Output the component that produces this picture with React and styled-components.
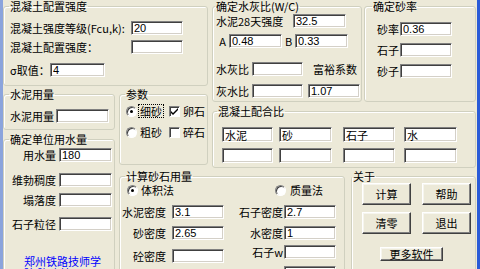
import React from 'react';
import styled, {createGlobalStyle} from 'styled-components';

const GlobalStyle = createGlobalStyle`
  html, body {
    margin: 0;
    padding: 0;
    height: 269px;
    overflow: hidden;
    background: #ECE9D8;
  }
  body {
    font-family: "Noto Sans CJK SC", "Liberation Sans", sans-serif;
    font-size: 11px;
    color: #000;
  }
`;

const Window = styled.div`
  width: 480px;
  height: 269px;
  box-sizing: border-box;
  overflow: hidden;
  background: #ECE9D8;
  border-left: 3px solid #8ba4dc;
  border-right: 3px solid #2a5bd7;
`;

const Form = styled.div`
  display: grid;
  grid-template-columns: 112px 4px 89px 4px 133px 6px 11px 2px 112px;
  grid-template-rows: 86px 2px 14px 3px 25px 3px 32px 3px 2px 120px;
  grid-template-areas:
    "g1 g1 g1 . g2 g2 g2 . g3"
    ".  .  .  . g2 g2 g2 . g3"
    "g4 . par . g2 g2 g2 . g3"
    "g4 . par . .  .  .  . . "
    "g4 . par . g7 g7 g7 g7 g7"
    ".  . par . g7 g7 g7 g7 g7"
    "g5 . par . g7 g7 g7 g7 g7"
    "g5 . .   . g7 g7 g7 g7 g7"
    "g5 . .   . .  .  .  . . "
    "g5 . calc calc calc . ab ab ab";
`;

const Group = styled.fieldset`
  grid-area: ${p => p.$area};
  margin: 0;
  padding: 0;
  min-width: 0;
  border: 1px solid #D0D0BF;
  border-radius: 3px;
  box-shadow: inset 1px 1px 0 #fff;
`;

const Legend = styled.legend`
  margin-left: ${p => p.$ml ?? 5}px;
  padding: 0 1px;
  font-size: 11px;
  line-height: 12px;
  white-space: nowrap;
`;

const Body = styled.div`
  display: flex;
  flex-direction: column;
  padding-left: ${p => p.$pl ?? 0}px;
`;

const Row = styled.div`
  display: flex;
  align-items: center;
  margin-top: ${p => p.$mt ?? 0}px;
  margin-left: ${p => p.$ml ?? 0}px;
`;

const Label = styled.span`
  flex: none;
  width: ${p => p.$w ? `${p.$w}px` : 'auto'};
  margin-left: ${p => p.$ml ?? 0}px;
  text-align: ${p => p.$align || 'left'};
  line-height: 14px;
  white-space: nowrap;
`;

const Field = styled.input`
  flex: none;
  box-sizing: border-box;
  width: ${p => p.$w ?? 52}px;
  height: ${p => p.$h ?? 14}px;
  margin: 0 0 0 ${p => p.$ml ?? 0}px;
  padding: 0 2px;
  background: #fff;
  border: 1px solid;
  border-color: #808080 #fff #fff #808080;
  box-shadow: inset 1px 1px 0 #404040, inset -1px -1px 0 #d4d0c8;
  font-family: "Liberation Sans", "Noto Sans CJK SC", sans-serif;
  font-size: 11px;
  line-height: 12px;
  color: #000;
  outline: none;
`;

const Radio = styled.span`
  flex: none;
  box-sizing: border-box;
  width: 11px;
  height: 11px;
  margin-left: ${p => p.$ml ?? 0}px;
  border-radius: 50%;
  background: #fff;
  border: 1px solid;
  border-color: #808080 #fff #fff #808080;
  box-shadow: inset 1px 1px 0 #404040;
  display: flex;
  align-items: center;
  justify-content: center;

  &::after {
    content: '';
    width: 3px;
    height: 3px;
    border-radius: 50%;
    background: ${p => p.$on ? '#000' : 'transparent'};
  }
`;

const Check = styled.span`
  flex: none;
  box-sizing: border-box;
  width: 11px;
  height: 11px;
  margin-left: ${p => p.$ml ?? 0}px;
  background: #fff;
  border: 1px solid;
  border-color: #808080 #fff #fff #808080;
  box-shadow: inset 1px 1px 0 #404040;
  display: flex;
  align-items: center;
  justify-content: center;
`;

const Focus = styled.span`
  flex: none;
  margin-left: ${p => p.$ml ?? 0}px;
  padding: 0 1px;
  border: 1px dotted #000;
  line-height: 12px;
  white-space: nowrap;
`;

const Credit = styled.div`
  margin: 24px 0 0 20px;
  width: 80px;
  color: #0000ff;
  line-height: 12px;
`;

const Buttons = styled.div`
  display: grid;
  grid-template-columns: 49px 49px;
  column-gap: 11px;
  row-gap: 7px;
  margin: 1px 0 0 10px;
`;

const Button = styled.button`
  box-sizing: border-box;
  width: ${p => p.$w ?? 49}px;
  height: ${p => p.$h ?? 22}px;
  margin-left: ${p => p.$ml ?? 0}px;
  margin-top: ${p => p.$mt ?? 0}px;
  padding: 0;
  background: #ECE9D8;
  border: 1px solid;
  border-color: #fff #404040 #404040 #fff;
  box-shadow: inset -1px -1px 0 #808080, inset 1px 1px 0 #f6f5ee;
  font-family: "Noto Sans CJK SC", sans-serif;
  font-size: 11px;
  line-height: 12px;
  color: #000;
`;

const Columns = styled.div`
  display: flex;
`;

const Col = styled.div`
  display: flex;
  flex-direction: column;
  width: ${p => p.$w}px;
`;

const Tick = () => (
  <svg width="7" height="7" viewBox="0 0 7 7">
    <path d="M0 3 L2 5 L7 0 L7 2 L2 7 L0 5 Z" fill="#000"/>
  </svg>
);

const App = () => {
  return (
    <>
      <GlobalStyle/>
      <Window>
        <Form>
          <Group $area="g1">
            <Legend>混凝土配置强度</Legend>
            <Body $pl={6}>
              <Row $mt={9}>
                <Label $w={121}>混凝土强度等级(Fcu,k):</Label>
                <Field readOnly value="20"/>
              </Row>
              <Row $mt={5}>
                <Label $w={121}>混凝土配置强度：</Label>
                <Field readOnly value=""/>
              </Row>
              <Row $mt={9}>
                <Label $w={40}>σ取值：</Label>
                <Field $w={55} readOnly value="4"/>
              </Row>
            </Body>
          </Group>

          <Group $area="g2">
            <Legend $ml={2}>确定水灰比(W/C)</Legend>
            <Body $pl={3}>
              <Row $mt={2}>
                <Label $w={77}>水泥28天强度</Label>
                <Field $w={53} readOnly value="32.5"/>
              </Row>
              <Row $mt={6}>
                <Label $w={13} $align="center">A</Label>
                <Field $w={53} readOnly value="0.48"/>
                <Label $w={13} $align="center">B</Label>
                <Field $w={53} readOnly value="0.33"/>
              </Row>
              <Row $mt={14}>
                <Label $w={36}>水灰比</Label>
                <Field $w={51} readOnly value=""/>
                <Label $ml={10}>富裕系数</Label>
              </Row>
              <Row $mt={8}>
                <Label $w={36}>灰水比</Label>
                <Field $w={51} readOnly value=""/>
                <Field $w={52} $ml={5} readOnly value="1.07"/>
              </Row>
            </Body>
          </Group>

          <Group $area="g3">
            <Legend $ml={7}>确定砂率</Legend>
            <Body>
              <Row $mt={10}>
                <Label $w={34} $align="right">砂率</Label>
                <Field $ml={1} readOnly value="0.36"/>
              </Row>
              <Row $mt={7}>
                <Label $w={34} $align="right">石子</Label>
                <Field $ml={1} readOnly value=""/>
              </Row>
              <Row $mt={7}>
                <Label $w={34} $align="right">砂子</Label>
                <Field $ml={1} readOnly value=""/>
              </Row>
            </Body>
          </Group>

          <Group $area="g4">
            <Legend>水泥用量</Legend>
            <Body $pl={6}>
              <Row $mt={9}>
                <Label $w={46}>水泥用量</Label>
                <Field $w={53} readOnly value=""/>
              </Row>
            </Body>
          </Group>

          <Group $area="par">
            <Legend>参数</Legend>
            <Body>
              <Row $mt={4}>
                <Radio $ml={6} $on/>
                <Focus $ml={1}>细砂</Focus>
                <Check $ml={5}><Tick/></Check>
                <Label $ml={3}>卵石</Label>
              </Row>
              <Row $mt={7}>
                <Radio $ml={6}/>
                <Label $ml={3}>粗砂</Label>
                <Check $ml={7}/>
                <Label $ml={3}>碎石</Label>
              </Row>
            </Body>
          </Group>

          <Group $area="g7">
            <Legend $ml={4}>混凝土配合比</Legend>
            <Body>
              <Row $mt={10}>
                <Field $w={51} $h={15} $ml={9} readOnly value="水泥"/>
                <Field $w={53} $h={15} $ml={6} readOnly value="砂"/>
                <Field $w={52} $h={15} $ml={11} readOnly value="石子"/>
                <Field $w={53} $h={15} $ml={9} readOnly value="水"/>
              </Row>
              <Row $mt={6}>
                <Field $w={51} $h={15} $ml={9} readOnly value=""/>
                <Field $w={53} $h={15} $ml={6} readOnly value=""/>
                <Field $w={52} $h={15} $ml={11} readOnly value=""/>
                <Field $w={53} $h={15} $ml={9} readOnly value=""/>
              </Row>
            </Body>
          </Group>

          <Group $area="g5">
            <Legend>确定单位用水量</Legend>
            <Body>
              <Row $mt={3}>
                <Label $w={52} $align="right">用水量</Label>
                <Field $w={53} $ml={3} readOnly value="180"/>
              </Row>
              <Row $mt={11}>
                <Label $w={52} $align="right">维勃稠度</Label>
                <Field $w={53} $ml={3} readOnly value=""/>
              </Row>
              <Row $mt={6}>
                <Label $w={52} $align="right">塌落度</Label>
                <Field $w={53} $ml={3} readOnly value=""/>
              </Row>
              <Row $mt={10}>
                <Label $w={52} $align="right">石子粒径</Label>
                <Field $w={53} $ml={3} readOnly value=""/>
              </Row>
              <Credit>郑州铁路技师学院 陈建林</Credit>
            </Body>
          </Group>

          <Group $area="calc">
            <Legend>计算砂石用量</Legend>
            <Body>
              <Columns>
                <Col $w={104}>
                  <Row $mt={1}>
                    <Radio $ml={7} $on/>
                    <Label $ml={3}>体积法</Label>
                  </Row>
                  <Row $mt={8}>
                    <Label $w={46} $align="right">水泥密度</Label>
                    <Field $ml={6} readOnly value="3.1"/>
                  </Row>
                  <Row $mt={7}>
                    <Label $w={46} $align="right">砂密度</Label>
                    <Field $ml={6} readOnly value="2.65"/>
                  </Row>
                  <Row $mt={9}>
                    <Label $w={46} $align="right">砼密度</Label>
                    <Field $ml={6} readOnly value=""/>
                  </Row>
                  <Row $mt={7}>
                    <Label $w={46} $align="right"></Label>
                    <Field $ml={6} readOnly value=""/>
                  </Row>
                </Col>
                <Col $w={112}>
                  <Row $mt={1}>
                    <Radio $ml={51}/>
                    <Label $ml={4}>质量法</Label>
                  </Row>
                  <Row $mt={8}>
                    <Label $w={59} $align="right">石子密度</Label>
                    <Field $ml={1} readOnly value="2.7"/>
                  </Row>
                  <Row $mt={7}>
                    <Label $w={59} $align="right">水密度</Label>
                    <Field $ml={1} readOnly value="1"/>
                  </Row>
                  <Row $mt={5}>
                    <Label $w={59} $align="right">石子w</Label>
                    <Field $ml={1} readOnly value=""/>
                  </Row>
                  <Row $mt={7}>
                    <Label $w={59} $align="right"></Label>
                    <Field $ml={1} readOnly value=""/>
                  </Row>
                </Col>
              </Columns>
            </Body>
          </Group>

          <Group $area="ab">
            <Legend $ml={0}>关于</Legend>
            <Body>
              <Buttons>
                <Button>计算</Button>
                <Button>帮助</Button>
                <Button>清零</Button>
                <Button>退出</Button>
              </Buttons>
              <Button $w={63} $h={14} $ml={28} $mt={13}>更多软件</Button>
            </Body>
          </Group>
        </Form>
      </Window>
    </>
  );
};

export default App;
